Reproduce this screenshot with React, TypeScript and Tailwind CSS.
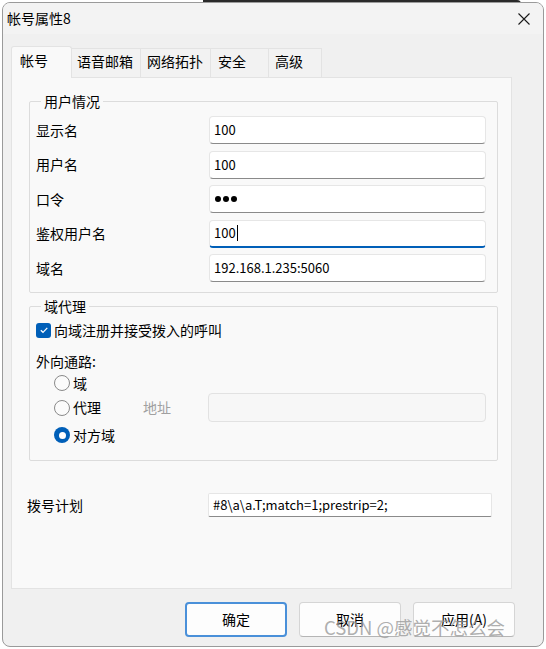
import React from "react";

const FONT = { fontFamily: '"Noto Sans CJK SC", "Noto Sans", sans-serif' };

const TextBox = ({
  value,
  width,
  focused = false,
}: {
  value: string;
  width: string;
  focused?: boolean;
}) => (
  <div
    className={`${width} h-[28px] bg-white rounded-[4px] border border-[#e6e6e6] flex items-center pl-[4px] text-[13px] text-black ${
      focused ? "border-b-2 border-b-[#005fb8]" : "border-b-[#8a8a8a]"
    }`}
  >
    {value}
    {focused && <span className="w-px h-[16px] bg-black ml-px" />}
  </div>
);

const Radio = ({ checked = false }: { checked?: boolean }) =>
  checked ? (
    <span className="w-[16px] h-[16px] rounded-full bg-[#005fb8] flex items-center justify-center">
      <span className="w-[7px] h-[7px] rounded-full bg-white" />
    </span>
  ) : (
    <span className="w-[16px] h-[16px] rounded-full border border-[#8a8a8a] bg-[#fbfbfb]" />
  );

const tabs = [
  { label: "语音邮箱", w: "w-[70px]", pl: "pl-[5px]" },
  { label: "网络拓扑", w: "w-[71px]", pl: "pl-[6px]" },
  { label: "安全", w: "w-[59px]", pl: "pl-[7px]" },
  { label: "高级", w: "w-[54px]", pl: "pl-[6px]" },
];

const rows = [
  { label: "显示名", value: "100" },
  { label: "用户名", value: "100" },
  { label: "口令", value: "", pwd: true },
  { label: "鉴权用户名", value: "100", focused: true },
  { label: "域名", value: "192.168.1.235:5060" },
];

export default function App() {
  return (
    <div className="relative w-[546px] h-[649px] bg-white overflow-hidden" style={FONT}>
      <div className="absolute top-0 left-[203px] w-[318px] h-[4px] bg-[#2a2a2a] rounded-tr-[6px]" />
      <div className="relative ml-[2px] mt-[2px] w-[542px] h-[645px] rounded-[8px] border border-[#9a9a9a] bg-[#f0f0f0] overflow-hidden flex flex-col">
        {/* title bar */}
        <div className="h-[31px] bg-[#f3f3f3] flex items-center justify-between pl-[4px] pr-[13px] shrink-0">
          <span className="text-[14px] text-black">帐号属性8</span>
          <svg width="12" height="12" viewBox="0 0 12 12">
            <path d="M0.5 0.5L11.5 11.5M11.5 0.5L0.5 11.5" stroke="#1a1a1a" strokeWidth="1.1" />
          </svg>
        </div>

        <div className="pl-[8px] flex flex-col">
          {/* tabs */}
          <div className="mt-[11px] h-[32px] flex items-end">
            <div className="w-[61px] h-[32px] bg-[#f9f9f9] border border-[#e3e3e3] border-b-0 rounded-t-[3px] pl-[8px] pt-[3px] text-[14px] text-black relative z-10 -mb-px">
              帐号
            </div>
            {tabs.map((t) => (
              <div
                key={t.label}
                className={`${t.w} ${t.pl} h-[29px] bg-[#f2f2f2] border border-[#e3e3e3] border-b-0 -ml-px pt-[2px] text-[14px] text-black`}
              >
                {t.label}
              </div>
            ))}
          </div>

          {/* tab page */}
          <div className="w-[501px] h-[512px] bg-[#f9f9f9] border border-[#e3e3e3] pt-[13px] pl-[17px] flex flex-col">
            <fieldset className="w-[469px] border border-[#dcdcdc] rounded-[2px] pl-[6px] pb-[10px]">
              <legend className="ml-[5px] px-[3px] text-[14px] leading-[20px] text-black">用户情况</legend>
              <div className="flex flex-col gap-[6.5px] mt-[5px]">
                {rows.map((r) => (
                  <div key={r.label} className="flex items-center">
                    <span className="w-[173px] text-[14px] text-black">{r.label}</span>
                    {r.pwd ? (
                      <div className="w-[277px] h-[28px] bg-white rounded-[4px] border border-[#e6e6e6] border-b-[#8a8a8a] flex items-center pl-[5px] gap-[2px]">
                        <span className="w-[6px] h-[6px] rounded-full bg-black" />
                        <span className="w-[6px] h-[6px] rounded-full bg-black" />
                        <span className="w-[6px] h-[6px] rounded-full bg-black" />
                      </div>
                    ) : (
                      <TextBox value={r.value} width="w-[277px]" focused={r.focused} />
                    )}
                  </div>
                ))}
              </div>
            </fieldset>

            <fieldset className="mt-[3px] w-[469px] border border-[#dcdcdc] rounded-[2px] pl-[6px] pb-[15px]">
              <legend className="ml-[5px] px-[3px] text-[14px] leading-[20px] text-black">域代理</legend>
              <div className="mt-[4px] h-[20px] flex items-center gap-[3px]">
                <span className="w-[15px] h-[15px] rounded-[3px] bg-[#005fb8] flex items-center justify-center">
                  <svg width="10" height="10" viewBox="0 0 10 10">
                    <path d="M1.8 5.2L4 7.3L8.3 2.8" fill="none" stroke="white" strokeWidth="1.2" />
                  </svg>
                </span>
                <span className="text-[14px] text-black">向域注册并接受拨入的呼叫</span>
              </div>
              <div className="mt-[11px] h-[20px] flex items-center text-[14px] text-black">外向通路:</div>
              <div className="mt-[2px] h-[20px] flex items-center gap-[3px] ml-[18px]">
                <Radio />
                <span className="text-[14px] text-black">域</span>
              </div>
              <div className="h-[29px] flex items-center ml-[18px]">
                <div className="w-[89px] flex items-center gap-[3px]">
                  <Radio />
                  <span className="text-[14px] text-black">代理</span>
                </div>
                <span className="w-[65px] text-[14px] text-[#a0a0a0]">地址</span>
                <div className="w-[278px] h-[29px] bg-[#f7f7f7] border border-[#e2e2e2] rounded-[4px]" />
              </div>
              <div className="mt-[3px] h-[20px] flex items-center gap-[3px] ml-[18px]">
                <Radio checked />
                <span className="text-[14px] text-black">对方域</span>
              </div>
            </fieldset>

            <div className="mt-[32px] -ml-[2px] flex items-center">
              <span className="w-[181px] text-[14px] text-black">拨号计划</span>
              <div className="w-[284px] h-[24px] bg-white rounded-[2px] border border-[#e6e6e6] border-b-[#8a8a8a] flex items-center pl-[4px] text-[13px] text-black">
                #8\a\a.T;match=1;prestrip=2;
              </div>
            </div>
          </div>

          {/* buttons */}
          <div className="mt-[13px] ml-[174px] flex gap-[12px]">
            <button className="w-[102px] h-[35px] rounded-[4px] border-2 border-[#4a90d9] bg-[#fdfdfd] text-[14px] text-black">
              确定
            </button>
            <button className="w-[102px] h-[35px] rounded-[4px] border border-[#d5d5d5] border-b-[#b5b5b5] bg-[#fdfdfd] text-[14px] text-black">
              取消
            </button>
            <button className="w-[102px] h-[35px] rounded-[4px] border border-[#d5d5d5] border-b-[#b5b5b5] bg-[#fdfdfd] text-[14px] text-black">
              应用(A)
            </button>
          </div>
        </div>
      </div>

      {/* watermark */}
      <div className="absolute left-[324px] top-[615px] text-[18.5px] leading-[24px] text-[#9a9a9a]/80 whitespace-nowrap">
        CSDN @感觉不怎么会
      </div>
    </div>
  );
}
